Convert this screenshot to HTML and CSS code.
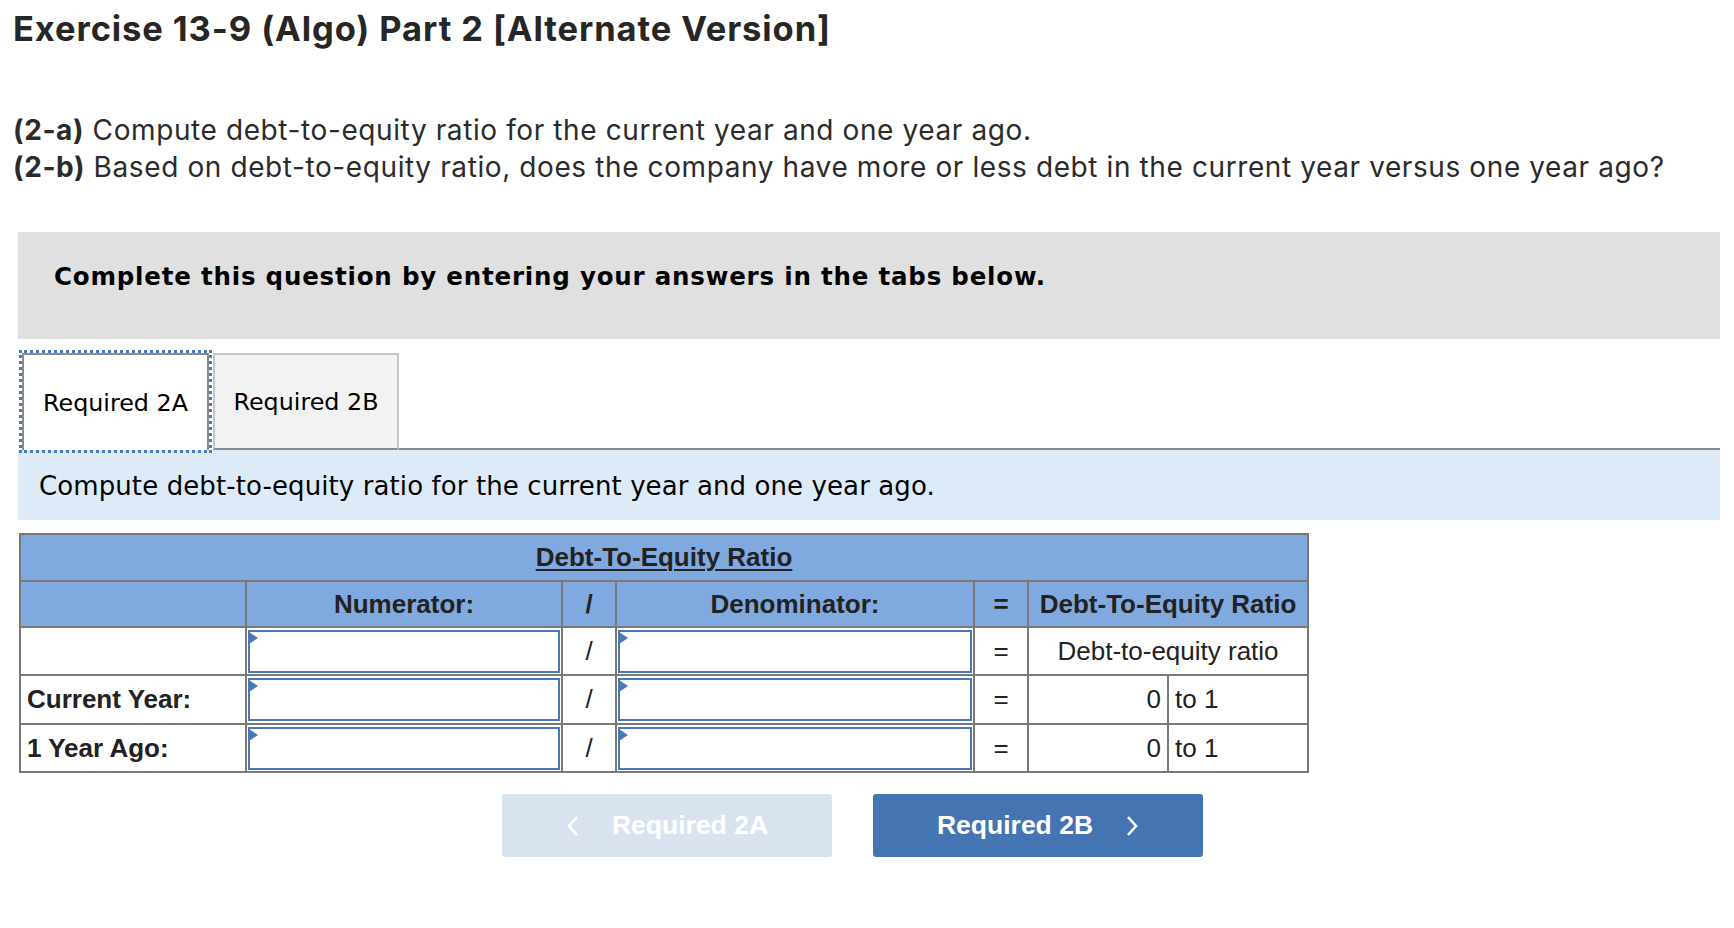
FILE: index.html
```html
<!DOCTYPE html>
<html lang="en">
<head>
<meta charset="utf-8">
<title>Exercise 13-9 (Algo) Part 2</title>
<link rel="stylesheet" href="styles.css">
</head>
<body>
<div class="page">
  <h1 class="title">Exercise 13-9 (Algo) Part 2 [Alternate Version]</h1>
  <div class="intro">
    <p><b>(2-a)</b> Compute debt-to-equity ratio for the current year and one year ago.</p>
    <p><b>(2-b)</b> Based on debt-to-equity ratio, does the company have more or less debt in the current year versus one year ago?</p>
  </div>

  <div class="panel">
    <div class="instructions">Complete this question by entering your answers in the tabs below.</div>

    <div class="tabs">
      <div class="tab tab-active">Required 2A</div>
      <div class="tab tab-idle">Required 2B</div>
      <div class="tab-rest"></div>
    </div>

    <div class="tab-desc">Compute debt-to-equity ratio for the current year and one year ago.</div>

    <table class="ratio-table">
      <colgroup>
        <col class="c-label">
        <col class="c-num">
        <col class="c-op">
        <col class="c-den">
        <col class="c-op">
        <col class="c-ra">
        <col class="c-rb">
      </colgroup>
      <thead>
        <tr class="h1">
          <th colspan="7"><span class="u">Debt-To-Equity Ratio</span></th>
        </tr>
        <tr class="h2">
          <th></th>
          <th>Numerator:</th>
          <th>/</th>
          <th>Denominator:</th>
          <th>=</th>
          <th colspan="2">Debt-To-Equity Ratio</th>
        </tr>
      </thead>
      <tbody>
        <tr class="r1">
          <td class="lbl"></td>
          <td class="in"><div class="field"></div></td>
          <td class="op">/</td>
          <td class="in"><div class="field"></div></td>
          <td class="op">=</td>
          <td class="mid" colspan="2">Debt-to-equity ratio</td>
        </tr>
        <tr class="r2">
          <td class="lbl">Current Year:</td>
          <td class="in"><div class="field"></div></td>
          <td class="op">/</td>
          <td class="in"><div class="field"></div></td>
          <td class="op">=</td>
          <td class="val">0</td>
          <td class="unit">to 1</td>
        </tr>
        <tr class="r3">
          <td class="lbl">1 Year Ago:</td>
          <td class="in"><div class="field"></div></td>
          <td class="op">/</td>
          <td class="in"><div class="field"></div></td>
          <td class="op">=</td>
          <td class="val">0</td>
          <td class="unit">to 1</td>
        </tr>
      </tbody>
    </table>

    <div class="nav">
      <button class="nav-btn nav-prev" type="button">
        <svg class="chev" width="14" height="22" viewBox="0 0 14 22"><polyline points="11,2 3,11 11,20" fill="none" stroke="#fff" stroke-width="2.6"/></svg>
        <span>Required 2A</span>
      </button>
      <button class="nav-btn nav-next" type="button">
        <span>Required 2B</span>
        <svg class="chev" width="14" height="22" viewBox="0 0 14 22"><polyline points="3,2 11,11 3,20" fill="none" stroke="#fff" stroke-width="2.6"/></svg>
      </button>
    </div>
  </div>
</div>
</body>
</html>
```

FILE: styles.css
```css
* { box-sizing: border-box; }

html, body {
  margin: 0;
  padding: 0;
  background: #ffffff;
}

.page {
  padding: 0 14px 0 13px;
}

.title {
  margin: 0;
  padding-top: 9px;
  font-family: "Inter", "Lato", "Liberation Sans", sans-serif;
  font-weight: 700;
  font-size: 34.5px;
  line-height: 40px;
  letter-spacing: 0.9px;
  color: #262626;
}

.intro {
  margin-top: 63px;
  font-family: "Inter", "Lato", "Liberation Sans", sans-serif;
  font-size: 28px;
  line-height: 37px;
  letter-spacing: 0.6px;
  color: #2b2b2b;
}

.intro p {
  margin: 0;
}

.intro b {
  font-weight: 700;
}

.panel {
  margin-top: 46px;
  margin-left: 5px;
}

.instructions {
  height: 107px;
  background: #e0e0e0;
  padding: 29px 0 0 36px;
  font-family: "DejaVu Sans", Verdana, sans-serif;
  font-weight: 700;
  font-size: 24.5px;
  letter-spacing: 0.8px;
  line-height: 32px;
  color: #000;
}

.tabs {
  display: flex;
  align-items: stretch;
  margin-top: 14px;
  height: 97px;
  padding-left: 4px;
}

.tab {
  display: flex;
  align-items: center;
  justify-content: center;
  font-family: "DejaVu Sans", Verdana, sans-serif;
  font-size: 23.8px;
  color: #000;
}

.tab-active {
  width: 187px;
  background: #fff;
  border: 2px solid #8a8a8a;
  border-bottom: none;
  outline: 3px dotted #4a7cc0;
  outline-offset: 0px;
  position: relative;
  z-index: 1;
}

.tab-idle {
  width: 186px;
  margin-left: 4px;
  background: #f2f2f2;
  border: 2px solid #c6c6c6;
  border-bottom: 2px solid #8a8a8a;
}

.tab-rest {
  flex: 1;
  border-bottom: 2px solid #8a8a8a;
}

.tab-desc {
  height: 70px;
  background: #ddebf8;
  padding-left: 21px;
  padding-top: 2px;
  display: flex;
  align-items: center;
  font-family: "DejaVu Sans", Verdana, sans-serif;
  font-size: 26px;
  letter-spacing: 0.1px;
  color: #000;
}

.ratio-table {
  margin-top: 13px;
  margin-left: 1px;
  width: 1288px;
  table-layout: fixed;
  border-collapse: collapse;
  font-family: "Liberation Sans", Arial, sans-serif;
  font-size: 26px;
  color: #222;
}

.c-label { width: 226px; }
.c-num { width: 316px; }
.c-op { width: 54px; }
.c-den { width: 358px; }
.c-ra { width: 140px; }
.c-rb { width: 140px; }

.ratio-table th,
.ratio-table td {
  border: 2px solid #797979;
  padding: 0;
  vertical-align: middle;
}

.ratio-table th {
  background: #80aadf;
  font-weight: 700;
  text-align: center;
}

.h1 { height: 47px; }
.h2 { height: 46px; }
.r1 { height: 48px; }
.r2 { height: 49px; }
.r3 { height: 48px; }

.u {
  text-decoration: underline;
  text-decoration-thickness: 2px;
  text-underline-offset: 3px;
}

.lbl {
  font-weight: 700;
  padding-left: 6px !important;
  text-align: left;
}

.op {
  text-align: center;
}

.mid {
  text-align: center;
}

.val {
  text-align: right;
  padding-right: 6px !important;
}

.unit {
  text-align: left;
  padding-left: 6px !important;
}

.ratio-table td.in {
  padding: 0;
}

.field {
  position: relative;
  height: 43px;
  margin: 0 1px;
  border: 2px solid #4a77b6;
  background: #fff;
}

.field::before {
  content: "";
  position: absolute;
  left: -1px;
  top: 0;
  width: 0;
  height: 0;
  border-left: 9px solid #4a77b6;
  border-top: 6px solid transparent;
  border-bottom: 6px solid transparent;
}

.nav {
  display: flex;
  gap: 41px;
  margin-top: 21px;
  padding-left: 484px;
}

.nav-btn {
  width: 330px;
  height: 63px;
  border: none;
  border-radius: 3px;
  display: flex;
  align-items: center;
  justify-content: center;
  gap: 32px;
  font-family: "Liberation Sans", Arial, sans-serif;
  font-weight: 700;
  font-size: 26.5px;
  color: #fff;
  padding: 0;
}

.nav-prev {
  background: #d9e3ef;
}

.nav-next {
  background: #4574b2;
}

.chev {
  display: block;
}
```
